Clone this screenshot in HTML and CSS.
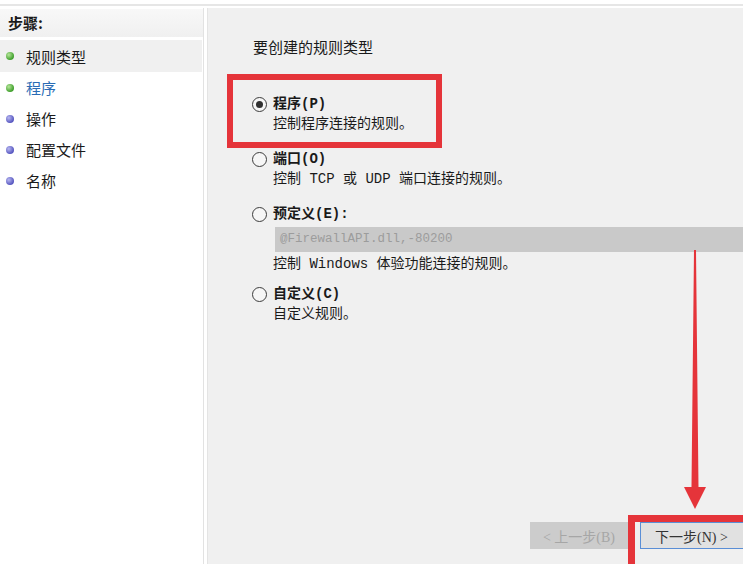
FILE: index.html
```html
<!DOCTYPE html>
<html lang="zh-CN">
<head>
  <meta charset="UTF-8">
  <meta name="viewport" content="width=device-width, initial-scale=1.0">
  <title>新建入站规则向导</title>
  <link rel="stylesheet" href="styles.css">
</head>
<body>
  <div class="topline"></div>

  <div class="window">
    <aside class="steps">
      <div class="steps-head">步骤:</div>
      <ul class="step-list">
        <li class="step done current"><span class="dot"></span>规则类型</li>
        <li class="step done active"><span class="dot"></span>程序</li>
        <li class="step"><span class="dot"></span>操作</li>
        <li class="step"><span class="dot"></span>配置文件</li>
        <li class="step"><span class="dot"></span>名称</li>
      </ul>
    </aside>

    <main class="page">
      <p class="page-title">要创建的规则类型</p>

      <div class="options">
        <div class="option">
          <div class="opt-title"><span class="radio checked"></span>程序(P)</div>
          <div class="opt-desc">控制程序连接的规则。</div>
        </div>
        <div class="option">
          <div class="opt-title"><span class="radio"></span>端口(O)</div>
          <div class="opt-desc">控制 TCP 或 UDP 端口连接的规则。</div>
        </div>
        <div class="option">
          <div class="opt-title"><span class="radio"></span>预定义(E):</div>
          <div class="predef">@FirewallAPI.dll,-80200</div>
          <div class="opt-desc">控制 Windows 体验功能连接的规则。</div>
        </div>
        <div class="option custom">
          <div class="opt-title"><span class="radio"></span>自定义(C)</div>
          <div class="opt-desc">自定义规则。</div>
        </div>
      </div>

      <div class="buttons">
        <button class="btn" disabled>&lt; 上一步(B)</button>
        <button class="btn primary">下一步(N) &gt;</button>
      </div>

      <!-- annotations drawn over the screenshot -->
      <div class="mark mark-option"></div>
      <div class="mark mark-next"></div>
      <svg class="arrow" width="30" height="270" viewBox="680 245 30 270">
        <path d="M695 250 L697 250 L699.5 487 L707 487 L696 509 L685 487 L692.5 487 Z" fill="#e5343a"/>
      </svg>
    </main>
  </div>
</body>
</html>
```

FILE: styles.css
```css
html {
  box-sizing: border-box;
}
*, *:before, *:after {
  box-sizing: inherit;
}
body { margin: 0; height: 564px; overflow: hidden; background: #fff; font-family: "Noto Sans CJK SC", sans-serif; color: #1a1a1a; display: flex; flex-direction: column; }
.topline { height: 6px; border-bottom: 2px solid #e6e6e6; margin-bottom: 2px; flex: none; }
.window { flex: 1; display: flex; min-height: 0; }

.steps { width: 204px; flex: none; border-right: 1px solid #e2e2e2; }
.steps-head { margin-top: 1px; height: 28px; line-height: 28px; padding-left: 8px; font-size: 15px; font-weight: bold; background: linear-gradient(#f8f8f8, #f0f0f0); }
.step-list { list-style: none; margin: 3px 0 0; padding: 0; }
.step { height: 31px; line-height: 31px; font-size: 15px; display: flex; align-items: center; padding-left: 6px; margin-right: 1px; }
.step.current { background: #f0f0f0; height: 32px; }
.step.active { color: #2a6cb5; }
.dot { width: 8px; height: 8px; border-radius: 50%; margin-right: 12px; background: radial-gradient(circle at 35% 35%, #b8b8f0, #5656c0 70%); }
.step.done .dot { background: radial-gradient(circle at 35% 35%, #b6e69a, #3f9f2c 70%); }

.page { flex: 1; position: relative; margin-left: 3px; border-left: 1px solid #e4e4e4; background: #f0f0f0; padding: 29px 0 15px 44px; display: flex; flex-direction: column; min-width: 0; }
.page-title { margin: 0 0 0 1px; font-size: 15px; line-height: 20px; }

.options { margin-top: 37px; display: flex; flex-direction: column; gap: 15px; font-family: "Liberation Mono", "Noto Sans CJK SC", monospace; font-size: 14px; }
.option.custom { margin-top: -5px; }
.opt-title, .opt-desc { line-height: 20px; }
.opt-title { font-weight: bold; display: flex; align-items: center; }
.opt-desc { padding-left: 21px; }
.radio { width: 15px; height: 15px; border: 1px solid #3c3c3c; border-radius: 50%; background: #f6f6f6; margin-right: 6px; position: relative; flex: none; }
.radio.checked:after { content: ""; position: absolute; left: 3px; top: 3px; width: 7px; height: 7px; border-radius: 50%; background: #303030; }
.predef { margin: 3px 0 2px 23px; height: 25px; line-height: 25px; padding-left: 5px; background: #c9c9c9; color: #9c9c9c; font-size: 12.5px; white-space: nowrap; }

.buttons { margin-top: auto; display: flex; justify-content: flex-end; gap: 12px; margin-right: -7px; }
.btn { height: 27px; width: 98px; font-family: "Liberation Serif", "Noto Sans CJK SC", serif; font-size: 14px; color: #333; background: #e1e1e1; border: 1px solid #adadad; padding: 0; }
.btn[disabled] { background: #cccccc; border-color: #cccccc; color: #a6a6a6; }
.btn.primary { width: 110px; border-color: #5a8ed6; text-align: left; padding-left: 14px; }

.mark { position: absolute; border: 6px solid #e5343a; }
.mark-option { left: 19px; top: 66px; width: 215px; height: 74px; }
.mark-next { left: 420px; top: 507px; width: 130px; height: 60px; border-width: 7px; }
.arrow { position: absolute; left: 471px; top: 237px; }
```
